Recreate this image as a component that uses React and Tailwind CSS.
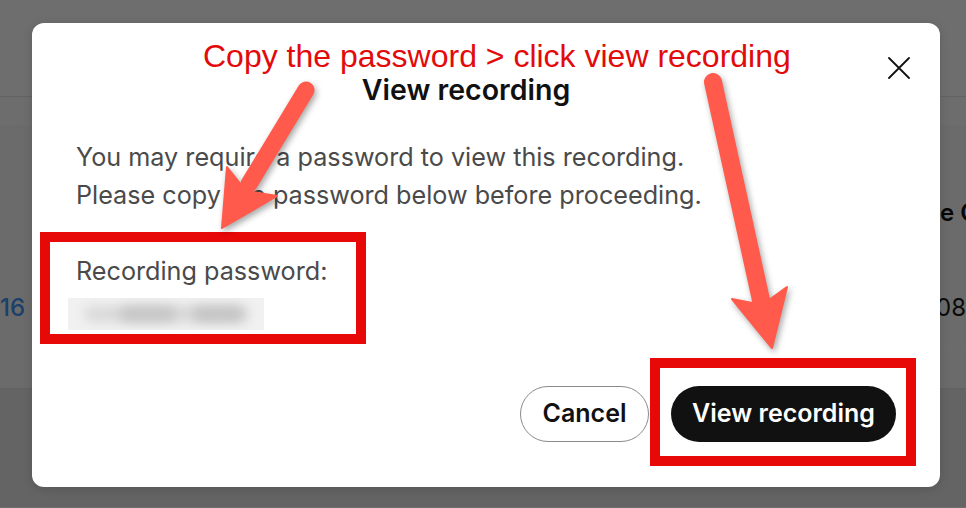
const sans = { fontFamily: 'Inter, "Noto Sans", sans-serif' };

function Background() {
  return (
    <div className="h-[508px] w-full bg-white" style={sans}>
      <div className="h-[97px] border-b border-[#e5e5e5] bg-white" />
      <div className="h-[30px] border-b border-[#f4f4f4] bg-[#fdfdfd]" />
      <div className="flex h-[219px] flex-col justify-between bg-[#f8f8f8] pt-[68px] pb-[20px]">
        <div className="whitespace-nowrap pl-[940px]">
          <span className="text-[24px] font-semibold text-[#111]">e Cr</span>
        </div>
        <div className="flex justify-between">
          <span className="text-[24px] font-medium text-[#4392f8]">16</span>
          <span className="text-[24px] text-[#1a1a1a]">08</span>
        </div>
      </div>
      <div className="h-[43px] border-t border-[#fbfbfb] border-b border-b-[#e2e2e2] bg-[#f8f8f8]" />
      <div className="h-[118px] bg-[#e8e8e8]" />
    </div>
  );
}

function CloseIcon() {
  return (
    <svg width="22" height="22" viewBox="0 0 22 22" fill="none" stroke="#111" strokeWidth="1.8" strokeLinecap="round">
      <path d="M1 1L21 21M21 1L1 21" />
    </svg>
  );
}

function BlurredPassword() {
  return (
    <div className="-ml-2 mt-2 flex h-8 w-[196px] items-center overflow-hidden bg-[#f1f1f1] px-2">
      <div className="relative h-6 w-full">
        <div className="absolute left-[8px] top-[5px] h-[14px] w-[164px] rounded-full bg-[#d6d6d6] blur-[6px]" />
        <div className="absolute left-[44px] top-[5px] h-[14px] w-[56px] rounded-full bg-[#c4c4c4] blur-[6px]" />
        <div className="absolute left-[116px] top-[5px] h-[14px] w-[52px] rounded-full bg-[#c2c2c2] blur-[6px]" />
      </div>
    </div>
  );
}

function Modal() {
  return (
    <div className="w-[908px] rounded-[12px] bg-white shadow-[0_2px_10px_rgba(0,0,0,0.15)]" style={sans}>
      <div className="flex items-start gap-[32px] pl-[44px] pr-[30px] pt-[34px]">
        <h2 className="mt-[17px] flex-1 text-center text-[28.5px] font-semibold leading-[32px] text-[#111]">
          View recording
        </h2>
        <button className="h-[22px] w-[22px]">
          <CloseIcon />
        </button>
      </div>
      <div className="px-[44px] pb-[45px]">
        <p className="mt-[32px] text-[25.2px] leading-[38px] text-[#4a4a4a]">
          You may require a password to view this recording.
          <br />
          Please copy the password below before proceeding.
        </p>
        <p className="mt-[38px] text-[25.2px] leading-[38px] text-[#4a4a4a]">Recording password:</p>
        <BlurredPassword />
        <div className="mt-[56px] flex justify-end gap-[22px]">
          <button className="h-[56px] w-[129px] rounded-full border border-[#8a8a8a] bg-white text-[25px] font-semibold text-[#111]">
            Cancel
          </button>
          <button className="h-[56px] w-[225px] rounded-full bg-[#111] text-[25px] font-semibold text-white">
            View recording
          </button>
        </div>
      </div>
    </div>
  );
}

function Arrows() {
  return (
    <svg
      className="pointer-events-none absolute inset-0"
      width="966"
      height="508"
      viewBox="0 0 966 508"
      style={{ filter: 'drop-shadow(2px 3px 3px rgba(0,0,0,0.35))' }}
    >
      <g fill="#ff5a4b" stroke="#ff5a4b" strokeLinecap="round" strokeLinejoin="round">
        <line x1="306" y1="90" x2="249" y2="184" strokeWidth="17" />
        <polygon points="222,228 227,167 246,191 277,196" strokeWidth="2" />
        <line x1="713" y1="82" x2="761" y2="300" strokeWidth="18" />
        <polygon points="772,348 732,299 762,305 787,287" strokeWidth="2" />
      </g>
    </svg>
  );
}

export default function App() {
  return (
    <div className="relative h-[508px] w-[966px] overflow-hidden">
      <Background />
      <div className="absolute inset-0 flex items-start bg-black/[0.57] pl-[32px] pt-[23px]">
        <Modal />
      </div>
      <div className="absolute left-[40px] top-[232px] h-[112px] w-[326px] border-[10px] border-[#e70808]" />
      <div className="absolute left-[650px] top-[358px] h-[108px] w-[266px] border-[10px] border-[#e70808]" />
      <Arrows />
      <div
        className="absolute left-[203px] top-[41px] whitespace-nowrap text-[32px] leading-[30px] text-[#e20a0a]"
        style={{ fontFamily: '"Liberation Sans", Arial, sans-serif' }}
      >
        Copy the password &gt; click view recording
      </div>
    </div>
  );
}
